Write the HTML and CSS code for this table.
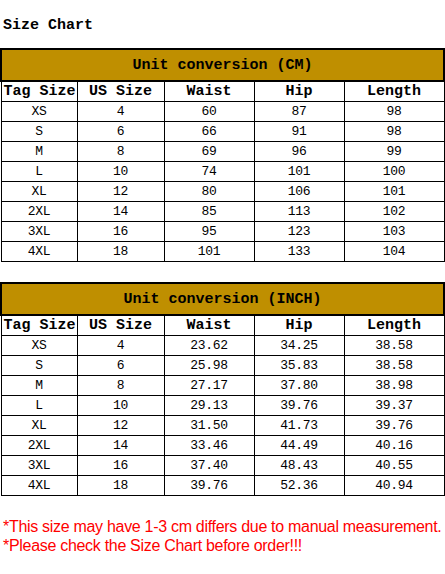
FILE: index.html
```html
<!DOCTYPE html>
<html>
<head>
<meta charset="utf-8">
<link rel="stylesheet" href="styles.css">
</head>
<body>
<div class="page">
  <h1 class="title">Size Chart</h1>

  <table class="chart chart-cm">
    <colgroup><col class="c1"><col class="c2"><col class="c3"><col class="c4"><col class="c5"></colgroup>
    <thead>
      <tr class="unit-row"><th colspan="5" class="unit">Unit conversion (CM)</th></tr>
      <tr class="head-row"><th>Tag Size</th><th>US Size</th><th>Waist</th><th>Hip</th><th>Length</th></tr>
    </thead>
    <tbody>
      <tr><td>XS</td><td>4</td><td>60</td><td>87</td><td>98</td></tr>
      <tr><td>S</td><td>6</td><td>66</td><td>91</td><td>98</td></tr>
      <tr><td>M</td><td>8</td><td>69</td><td>96</td><td>99</td></tr>
      <tr><td>L</td><td>10</td><td>74</td><td>101</td><td>100</td></tr>
      <tr><td>XL</td><td>12</td><td>80</td><td>106</td><td>101</td></tr>
      <tr><td>2XL</td><td>14</td><td>85</td><td>113</td><td>102</td></tr>
      <tr><td>3XL</td><td>16</td><td>95</td><td>123</td><td>103</td></tr>
      <tr><td>4XL</td><td>18</td><td>101</td><td>133</td><td>104</td></tr>
    </tbody>
  </table>

  <table class="chart chart-inch">
    <colgroup><col class="c1"><col class="c2"><col class="c3"><col class="c4"><col class="c5"></colgroup>
    <thead>
      <tr class="unit-row"><th colspan="5" class="unit">Unit conversion (INCH)</th></tr>
      <tr class="head-row"><th>Tag Size</th><th>US Size</th><th>Waist</th><th>Hip</th><th>Length</th></tr>
    </thead>
    <tbody>
      <tr><td>XS</td><td>4</td><td>23.62</td><td>34.25</td><td>38.58</td></tr>
      <tr><td>S</td><td>6</td><td>25.98</td><td>35.83</td><td>38.58</td></tr>
      <tr><td>M</td><td>8</td><td>27.17</td><td>37.80</td><td>38.98</td></tr>
      <tr><td>L</td><td>10</td><td>29.13</td><td>39.76</td><td>39.37</td></tr>
      <tr><td>XL</td><td>12</td><td>31.50</td><td>41.73</td><td>39.76</td></tr>
      <tr><td>2XL</td><td>14</td><td>33.46</td><td>44.49</td><td>40.16</td></tr>
      <tr><td>3XL</td><td>16</td><td>37.40</td><td>48.43</td><td>40.55</td></tr>
      <tr><td>4XL</td><td>18</td><td>39.76</td><td>52.36</td><td>40.94</td></tr>
    </tbody>
  </table>

  <div class="notes">
    <p>*This size may have 1-3 cm differs due to manual measurement.</p>
    <p>*Please check the Size Chart before order!!!</p>
  </div>
</div>
</body>
</html>
```

FILE: styles.css
```css
html, body {
  margin: 0;
  padding: 0;
  background: #ffffff;
}

.page {
  width: 445px;
}

.title {
  margin: 0;
  padding: 17px 0 0 3px;
  height: 48px;
  box-sizing: border-box;
  font-family: "Liberation Mono", monospace;
  font-size: 15px;
  font-weight: bold;
  line-height: 17px;
  color: #000;
}

.chart {
  border-collapse: collapse;
  table-layout: fixed;
  width: 443px;
  margin: 0;
  font-family: "Liberation Mono", monospace;
  color: #000;
}

.chart-inch {
  margin-top: 20px;
}

.c1 { width: 76px; }
.c2 { width: 87px; }
.c3 { width: 90px; }
.c4 { width: 90px; }
.c5 { width: 100px; }

.chart th,
.chart td {
  border: 1px solid #000;
  padding: 0;
  text-align: center;
  white-space: nowrap;
  overflow: hidden;
}

.chart .unit {
  background: #bf8f00;
  border: 2px solid #000;
  height: 30px;
  font-size: 15px;
  font-weight: bold;
}

.head-row th {
  height: 19px;
  font-size: 15px;
  font-weight: bold;
}

.head-row th:first-child {
  text-align: left;
  padding-left: 2px;
}

.chart td {
  height: 19px;
  font-size: 13px;
  letter-spacing: -0.3px;
}

.notes {
  margin-top: 21px;
  padding-left: 3px;
  font-family: "Liberation Sans", Arial, sans-serif;
  font-size: 16px;
  line-height: 19px;
  color: #ff0000;
  letter-spacing: -0.3px;
}

.notes p {
  margin: 0;
  white-space: nowrap;
}
```
